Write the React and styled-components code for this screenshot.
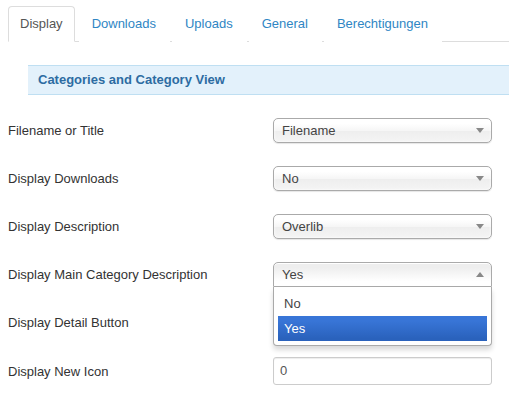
import React from 'react'
import styled, { createGlobalStyle } from 'styled-components'

const GlobalStyle = createGlobalStyle`
  body {
    margin: 0;
    background: #fff;
    font-family: "Liberation Sans", Arial, sans-serif;
    font-size: 13px;
    color: #333;
  }
`

const tabs = ['Display', 'Downloads', 'Uploads', 'General', 'Berechtigungen']

// the detail button select sits under the open dropdown, so its value is not shown
const rows = [
  { label: 'Filename or Title', type: 'select', value: 'Filename' },
  { label: 'Display Downloads', type: 'select', value: 'No' },
  { label: 'Display Description', type: 'select', value: 'Overlib' },
  { label: 'Display Main Category Description', type: 'open', value: 'Yes', options: ['No', 'Yes'] },
  { label: 'Display Detail Button', type: 'select', value: '' },
  { label: 'Display New Icon', type: 'input', value: '0' },
]

const Arrow = ({ up }) => (
  <ArrowIcon width="8" height="5" viewBox="0 0 8 5">
    {up ? <path d="M0 5 L4 0 L8 5 Z" fill="#888" /> : <path d="M0 0 L8 0 L4 5 Z" fill="#888" />}
  </ArrowIcon>
)

const App = () => {
  return (
    <Page>
      <GlobalStyle />
      <TabBar>
        {tabs.map((t, i) => (
          <Tab key={t} active={i === 0}>{t}</Tab>
        ))}
      </TabBar>
      <Heading>Categories and Category View</Heading>
      <Form>
        {rows.map((r) => (
          <Row key={r.label}>
            <Label>{r.label}</Label>
            {r.type === 'input' && <TextInput>{r.value}</TextInput>}
            {r.type === 'select' && (
              <Select>
                <span>{r.value}</span>
                <Arrow />
              </Select>
            )}
            {r.type === 'open' && (
              <SelectWrap>
                <Select open>
                  <span>{r.value}</span>
                  <Arrow up />
                </Select>
                <Drop>
                  {r.options.map((o) => (
                    <Option key={o} selected={o === r.value}>{o}</Option>
                  ))}
                </Drop>
              </SelectWrap>
            )}
          </Row>
        ))}
      </Form>
    </Page>
  )
}

const Page = styled.div`
  padding-top: 6px;
`

const TabBar = styled.div`
  display: flex;
  margin-left: 8px;
  border-bottom: 1px solid #ddd;
`

const Tab = styled.div`
  padding: 7px 13px 7px 12px;
  line-height: 20px;
  margin-right: 2px;
  margin-bottom: -1px;
  border: 1px solid ${(p) => (p.active ? '#ddd' : 'transparent')};
  border-bottom-color: ${(p) => (p.active ? '#fff' : 'transparent')};
  border-radius: 4px 4px 0 0;
  background: #fff;
  color: ${(p) => (p.active ? '#555' : '#2f86c4')};
  &:first-child {
    padding: 7px 11px;
    margin-right: 4px;
  }
`

const Heading = styled.div`
  margin: 23px 0 0 28px;
  padding: 6px 10px 6px;
  line-height: 16px;
  background: #e3f1fb;
  border-top: 1px solid #bfdff2;
  border-bottom: 1px solid #bfdff2;
  color: #2d6ca2;
  font-weight: bold;
`

const Form = styled.div`
  margin-top: 23px;
`

const Row = styled.div`
  display: flex;
  align-items: center;
  height: 25px;
  margin-bottom: 23px;
  &:last-child {
    height: 28px;
    margin-top: -1px;
  }
`

const Label = styled.div`
  width: 273px;
  padding-left: 8px;
  box-sizing: border-box;
  color: #333;
`

const SelectWrap = styled.div`
  position: relative;
  width: 219px;
  z-index: 2;
`

const Select = styled.div`
  width: 219px;
  height: 25px;
  box-sizing: border-box;
  display: flex;
  align-items: center;
  justify-content: space-between;
  padding: 0 7px 0 8px;
  border: 1px solid #aaa;
  border-radius: ${(p) => (p.open ? '5px 5px 0 0' : '5px')};
  background: ${(p) =>
    p.open
      ? 'linear-gradient(#eee 20%, #fff 80%)'
      : 'linear-gradient(#fff 20%, #f6f6f6 50%, #eee 52%, #f4f4f4 100%)'};
  box-shadow: ${(p) => (p.open ? '0 1px 0 #fff inset' : '0 0 3px #fff inset, 0 1px 1px rgba(0, 0, 0, 0.1)')};
  color: #444;
  line-height: 23px;
`

const ArrowIcon = styled.svg`
  display: block;
`

const Drop = styled.div`
  position: absolute;
  top: 25px;
  left: 0;
  right: 0;
  box-sizing: border-box;
  padding: 4px;
  background: #fff;
  border: 1px solid #aaa;
  border-top: 0;
  border-radius: 0 0 4px 4px;
  box-shadow: 0 4px 5px rgba(0, 0, 0, 0.15);
`

const Option = styled.div`
  padding: 5px 6px;
  line-height: 15px;
  color: ${(p) => (p.selected ? '#fff' : '#444')};
  background: ${(p) => (p.selected ? 'linear-gradient(#3875d7 20%, #2a62bc 90%)' : 'transparent')};
`

const TextInput = styled.div`
  width: 219px;
  height: 28px;
  box-sizing: border-box;
  padding: 4px 6px;
  line-height: 18px;
  border: 1px solid #ccc;
  border-radius: 3px;
  box-shadow: inset 0 1px 1px rgba(0, 0, 0, 0.075);
  color: #555;
`

export default App
